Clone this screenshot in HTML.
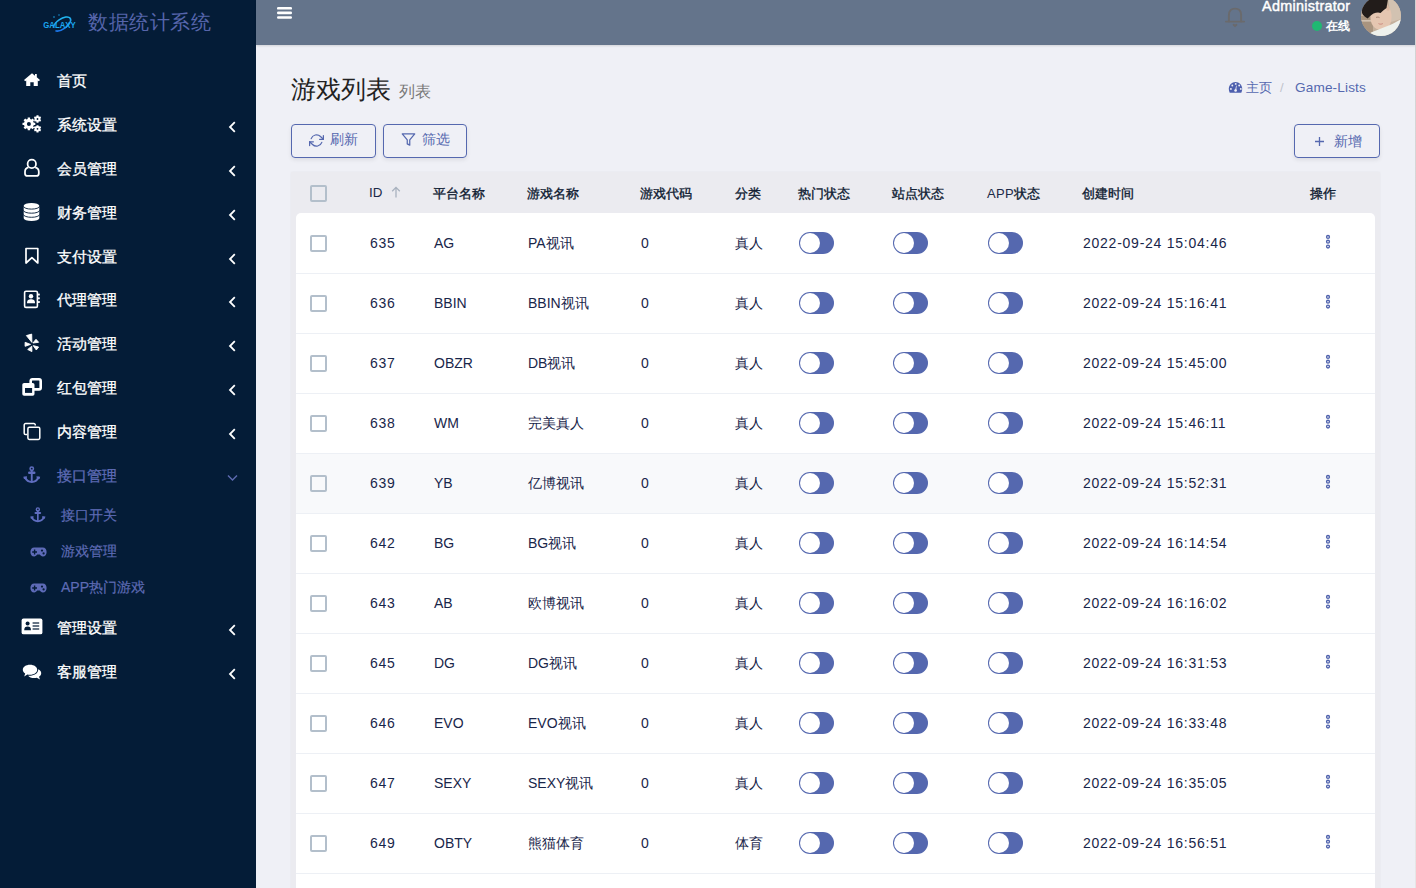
<!DOCTYPE html>
<html><head><meta charset="utf-8">
<style>
*{margin:0;padding:0;box-sizing:border-box}
html,body{width:1416px;height:888px;overflow:hidden;background:#eff0f6;font-family:"Liberation Sans",sans-serif}
.abs{position:absolute}
.ico{position:absolute;overflow:visible}
#side{position:absolute;left:0;top:0;width:256px;height:888px;background:#041c37}
#hdr{position:absolute;left:256px;top:0;width:1160px;height:45px;background:#64748b;box-shadow:0 1px 2px rgba(0,0,0,.12)}
.mi{position:absolute;left:57px;color:#fff;font-size:15px;font-weight:500;-webkit-text-stroke:.3px currentColor;line-height:20px;white-space:nowrap}
.mi.act{color:#5e6bb5}
.si{position:absolute;left:61px;color:#5e6bb5;font-size:14px;-webkit-text-stroke:.2px currentColor;line-height:18px;white-space:nowrap}
.chev{position:absolute;left:228px}
.t{position:absolute;white-space:nowrap;line-height:18px}
.th{font-size:13px;font-weight:500;-webkit-text-stroke:.35px currentColor;color:#0d1a31;top:184.5px}
.td{font-size:14px;color:#19264a;letter-spacing:.75px;font-weight:500}
.cb{position:absolute;left:310px;width:17px;height:17px;border:2px solid #b3bfcb;border-radius:2px}
.tg{position:absolute;width:35px;height:22px;border-radius:11px;background:#5568af}
.tg:after{content:"";position:absolute;left:1px;top:1px;width:20px;height:20px;border-radius:50%;background:#fff}
.btn{position:absolute;top:124px;height:34px;border:1px solid #5568af;border-radius:4px;box-shadow:0 2px 4px rgba(0,0,0,.08);color:#5568af;font-size:14px}

</style></head><body>
<div id="side">
<svg class="ico" style="left:40px;top:12px" width="40" height="24" viewBox="0 0 40 24">
<defs><linearGradient id="lg" x1="0" y1="1" x2="1" y2="0"><stop offset="0" stop-color="#1a6cf0"/><stop offset="1" stop-color="#22c4f0"/></linearGradient></defs>
<ellipse cx="22" cy="12" rx="10" ry="5" transform="rotate(-35 22 12)" fill="none" stroke="url(#lg)" stroke-width="1.6" stroke-dasharray="22 4 30"/>
<text x="3.2" y="15.8" font-family="Liberation Sans" font-weight="bold" font-size="8.3" fill="#1aa8f0" letter-spacing=".05" textLength="32.6" lengthAdjust="spacingAndGlyphs">GALAXY</text>
<circle cx="14" cy="5" r=".8" fill="#1aa8f0"/><circle cx="19" cy="3" r=".7" fill="#1aa8f0"/>
</svg>
<div class="abs" style="left:88px;top:9px;font-size:20px;line-height:26px;font-weight:300;letter-spacing:.55px;color:#5665ab;white-space:nowrap">数据统计系统</div>
<svg class="ico" style="left:23px;top:72px" width="18" height="15" viewBox="0 0 18 15"><path d="M9 1.2 L1 8 L2.2 9.2 L3.2 8.4 V14 H7.3 V10.2 H10.7 V14 H14.8 V8.4 L15.8 9.2 L17 8 L13.8 5.3 V2 H12 V3.8 Z" fill="#fff"/></svg>
<div class="mi" style="top:71px">首页</div>
<svg class="ico" style="left:19px;top:112px" width="26" height="24" viewBox="0 0 26 24"><path fill-rule="evenodd" fill="#fff" d="M8.69 7.05 L8.69 5.51 L11.11 5.51 L11.11 7.05 L12.48 7.61 L13.56 6.53 L15.27 8.24 L14.19 9.32 L14.75 10.69 L16.29 10.69 L16.29 13.11 L14.75 13.11 L14.19 14.48 L15.27 15.56 L13.56 17.27 L12.48 16.19 L11.11 16.75 L11.11 18.29 L8.69 18.29 L8.69 16.75 L7.32 16.19 L6.24 17.27 L4.53 15.56 L5.61 14.48 L5.05 13.11 L3.51 13.11 L3.51 10.69 L5.05 10.69 L5.61 9.32 L4.53 8.24 L6.24 6.53 L7.32 7.61Z M11.90 11.90 A2.0 2.0 0 1 0 7.90 11.90 A2.0 2.0 0 1 0 11.90 11.90Z M17.50 4.28 L17.46 3.34 L19.54 3.34 L19.50 4.28 L20.36 4.77 L21.15 4.27 L22.18 6.07 L21.36 6.50 L21.36 7.50 L22.18 7.93 L21.15 9.73 L20.36 9.23 L19.50 9.72 L19.54 10.66 L17.46 10.66 L17.50 9.72 L16.64 9.23 L15.85 9.73 L14.82 7.93 L15.64 7.50 L15.64 6.50 L14.82 6.07 L15.85 4.27 L16.64 4.77Z M19.40 7.00 A0.9 0.9 0 1 0 17.60 7.00 A0.9 0.9 0 1 0 19.40 7.00Z M17.50 14.08 L17.46 13.14 L19.54 13.14 L19.50 14.08 L20.36 14.57 L21.15 14.07 L22.18 15.87 L21.36 16.30 L21.36 17.30 L22.18 17.73 L21.15 19.53 L20.36 19.03 L19.50 19.52 L19.54 20.46 L17.46 20.46 L17.50 19.52 L16.64 19.03 L15.85 19.53 L14.82 17.73 L15.64 17.30 L15.64 16.30 L14.82 15.87 L15.85 14.07 L16.64 14.57Z M19.40 16.80 A0.9 0.9 0 1 0 17.60 16.80 A0.9 0.9 0 1 0 19.40 16.80Z"/></svg>
<div class="mi" style="top:115px">系统设置</div>
<svg class="chev" style="top:120.5px" width="9" height="12" viewBox="0 0 9 12"><path d="M6.8 1.2 L2 6 L6.8 10.8" fill="none" stroke="#fff" stroke-width="1.8"/></svg>
<svg class="ico" style="left:19px;top:155px" width="26" height="26" viewBox="0 0 26 26"><g fill="none" stroke="#fff" stroke-width="1.75"><circle cx="12.8" cy="8.9" r="4.2"/><path d="M9.4 12.4 C7.2 12.9 6 14.6 6 16.8 V18.4 C6 19.9 7 20.9 8.5 20.9 H17.3 C18.8 20.9 19.8 19.9 19.8 18.4 V16.8 C19.8 14.6 18.6 12.9 16.2 12.4"/></g></svg>
<div class="mi" style="top:159px">会员管理</div>
<svg class="chev" style="top:164.5px" width="9" height="12" viewBox="0 0 9 12"><path d="M6.8 1.2 L2 6 L6.8 10.8" fill="none" stroke="#fff" stroke-width="1.8"/></svg>
<svg class="ico" style="left:23px;top:202px" width="17" height="20" viewBox="0 0 17 20"><path d="M.7 3.7 A7.8 2.8 0 0 1 16.3 3.7 V16.3 A7.8 2.8 0 0 1 .7 16.3 Z" fill="#fff"/><g fill="none" stroke="#041c37" stroke-width=".9"><path d="M.5 4.3 A8 2.8 0 0 0 16.5 4.3"/><path d="M.5 8.4 A8 2.8 0 0 0 16.5 8.4"/><path d="M.5 12.5 A8 2.8 0 0 0 16.5 12.5"/></g></svg>
<div class="mi" style="top:203px">财务管理</div>
<svg class="chev" style="top:208.5px" width="9" height="12" viewBox="0 0 9 12"><path d="M6.8 1.2 L2 6 L6.8 10.8" fill="none" stroke="#fff" stroke-width="1.8"/></svg>
<svg class="ico" style="left:24px;top:247px" width="16" height="18" viewBox="0 0 16 18"><path d="M2 1.5 H13.8 V16 L7.9 10.6 L2 16 Z" fill="none" stroke="#fff" stroke-width="1.7" stroke-linejoin="round"/></svg>
<div class="mi" style="top:247px">支付设置</div>
<svg class="chev" style="top:252.5px" width="9" height="12" viewBox="0 0 9 12"><path d="M6.8 1.2 L2 6 L6.8 10.8" fill="none" stroke="#fff" stroke-width="1.8"/></svg>
<svg class="ico" style="left:23px;top:290px" width="18" height="19" viewBox="0 0 18 19"><rect x="1.6" y="1.2" width="12.8" height="16.2" rx="1.4" fill="none" stroke="#fff" stroke-width="1.6"/><g fill="#fff"><circle cx="8" cy="6.3" r="2.2"/><path d="M4 13.3 C4 10 5.5 9.2 8 9.2 C10.5 9.2 12 10 12 13.3 Z"/><rect x="15" y="3.6" width="1.8" height="1.9" rx=".5"/><rect x="15" y="7.3" width="1.8" height="1.9" rx=".5"/><rect x="15" y="11" width="1.8" height="1.9" rx=".5"/></g></svg>
<div class="mi" style="top:290px">代理管理</div>
<svg class="chev" style="top:295.5px" width="9" height="12" viewBox="0 0 9 12"><path d="M6.8 1.2 L2 6 L6.8 10.8" fill="none" stroke="#fff" stroke-width="1.8"/></svg>
<svg class="ico" style="left:24px;top:333px" width="16" height="20" viewBox="0 0 16 20"><g fill="#fff" stroke="#fff" stroke-width=".9" stroke-linejoin="round"><path d="M2.4 2.6 L7.7 1.1 L7.9 9.4 Z"/><path d="M8.9 10 L12 6.3 L14.6 9.3 Z"/><path d="M1.1 9.3 L6.5 11.4 L1.1 13.3 Z"/><path d="M3.7 16.5 L7.8 13.2 L7.9 18.6 Z"/><path d="M9.2 12.6 L14.6 14 L12.3 17 Z"/></g></svg>
<div class="mi" style="top:334px">活动管理</div>
<svg class="chev" style="top:339.5px" width="9" height="12" viewBox="0 0 9 12"><path d="M6.8 1.2 L2 6 L6.8 10.8" fill="none" stroke="#fff" stroke-width="1.8"/></svg>
<svg class="ico" style="left:22px;top:378px" width="21" height="19" viewBox="0 0 21 19"><rect x="8.7" y="1.3" width="10" height="10.1" rx="1.6" fill="none" stroke="#fff" stroke-width="2.6"/><rect x=".3" y="5" width="12.2" height="12.7" rx="1.8" fill="#fff"/><rect x="3" y="10" width="7.1" height="4.9" fill="#041c37"/></svg>
<div class="mi" style="top:378px">红包管理</div>
<svg class="chev" style="top:383.5px" width="9" height="12" viewBox="0 0 9 12"><path d="M6.8 1.2 L2 6 L6.8 10.8" fill="none" stroke="#fff" stroke-width="1.8"/></svg>
<svg class="ico" style="left:23px;top:422px" width="18" height="19" viewBox="0 0 18 19"><g fill="none" stroke="#fff" stroke-width="1.5"><path d="M12.3 3.6 V3 a1.4 1.4 0 0 0-1.4-1.4 H2.6 A1.4 1.4 0 0 0 1.2 3 V11.2 a1.4 1.4 0 0 0 1.4 1.4 H4.2"/><rect x="4.9" y="5.3" width="11.9" height="12.2" rx="1.4"/></g></svg>
<div class="mi" style="top:422px">内容管理</div>
<svg class="chev" style="top:427.5px" width="9" height="12" viewBox="0 0 9 12"><path d="M6.8 1.2 L2 6 L6.8 10.8" fill="none" stroke="#fff" stroke-width="1.8"/></svg>
<svg class="ico" style="left:23px;top:466px" width="17.5" height="17.5" viewBox="0 0 18 18"><g fill="none" stroke="#5f6dbf" stroke-linecap="round"><circle cx="9" cy="2.8" r="1.75" stroke-width="1.6"/><path d="M9 4.6 V16" stroke-width="1.9"/><path d="M6.4 6.9 H11.6" stroke-width="2.5"/><path d="M2.2 12 C3.6 15.2 6 16.4 9 16.4 C12 16.4 14.4 15.2 15.8 12" stroke-width="2"/></g><path d="M.3 11 L4.2 10.6 L3.6 13.6 L1 13.4Z M17.7 11 L13.8 10.6 L14.4 13.6 L17 13.4Z" fill="#5f6dbf"/></svg>
<div class="mi act" style="top:466px">接口管理</div>
<svg class="chev" style="left:227px;top:474px" width="11" height="8" viewBox="0 0 11 8"><path d="M1 1.4 L5.5 6 L10 1.4" fill="none" stroke="#5d6ab0" stroke-width="1.4"/></svg>
<svg class="ico" style="left:29.5px;top:507px" width="15.7" height="15.7" viewBox="0 0 18 18"><g fill="none" stroke="#5f6dbf" stroke-linecap="round"><circle cx="9" cy="2.8" r="1.75" stroke-width="1.6"/><path d="M9 4.6 V16" stroke-width="1.9"/><path d="M6.4 6.9 H11.6" stroke-width="2.5"/><path d="M2.2 12 C3.6 15.2 6 16.4 9 16.4 C12 16.4 14.4 15.2 15.8 12" stroke-width="2"/></g><path d="M.3 11 L4.2 10.6 L3.6 13.6 L1 13.4Z M17.7 11 L13.8 10.6 L14.4 13.6 L17 13.4Z" fill="#5f6dbf"/></svg>
<div class="si" style="top:506px">接口开关</div>
<svg class="ico" style="left:30px;top:547px" width="17" height="10" viewBox="0 0 17 10"><path d="M4.2 .5 H12.8 C15.2 .5 16.6 2.4 16.6 5 C16.6 7.6 15.2 9.5 12.8 9.5 C11.4 9.5 10.6 8.4 9.8 7.6 H7.2 C6.4 8.4 5.6 9.5 4.2 9.5 C1.8 9.5 .4 7.6 .4 5 C.4 2.4 1.8 .5 4.2 .5Z" fill="#5e6bb8"/><path d="M4.6 2.6 V7.4 M2.2 5 H7" stroke="#041c37" stroke-width="1.4"/><circle cx="12" cy="3.6" r="1.1" fill="#041c37"/><circle cx="13.6" cy="6.4" r="1.1" fill="#041c37"/></svg>
<div class="si" style="top:542px">游戏管理</div>
<svg class="ico" style="left:30px;top:583px" width="17" height="10" viewBox="0 0 17 10"><path d="M4.2 .5 H12.8 C15.2 .5 16.6 2.4 16.6 5 C16.6 7.6 15.2 9.5 12.8 9.5 C11.4 9.5 10.6 8.4 9.8 7.6 H7.2 C6.4 8.4 5.6 9.5 4.2 9.5 C1.8 9.5 .4 7.6 .4 5 C.4 2.4 1.8 .5 4.2 .5Z" fill="#5e6bb8"/><path d="M4.6 2.6 V7.4 M2.2 5 H7" stroke="#041c37" stroke-width="1.4"/><circle cx="12" cy="3.6" r="1.1" fill="#041c37"/><circle cx="13.6" cy="6.4" r="1.1" fill="#041c37"/></svg>
<div class="si" style="top:578px">APP热门游戏</div>
<svg class="ico" style="left:21px;top:618px" width="22" height="18" viewBox="0 0 22 18"><path d="M2.5 .6 H19.5 a1.9 1.9 0 0 1 1.9 1.9 V14.4 a1.9 1.9 0 0 1-1.9 1.9 H2.5 A1.9 1.9 0 0 1 .6 14.4 V2.5 A1.9 1.9 0 0 1 2.5 .6Z" fill="#fff"/><g fill="#041c37"><circle cx="6.6" cy="5.6" r="2"/><path d="M3.2 12.2 C3.2 9.4 4.4 8.4 6.6 8.4 C8.8 8.4 10 9.4 10 12.2Z"/><rect x="11.6" y="4.4" width="6.6" height="1.2"/><rect x="11.6" y="7.4" width="6.6" height="1.2"/><rect x="11.6" y="10.4" width="6.6" height="1.2"/></g></svg>
<div class="mi" style="top:618px">管理设置</div>
<svg class="chev" style="top:623.5px" width="9" height="12" viewBox="0 0 9 12"><path d="M6.8 1.2 L2 6 L6.8 10.8" fill="none" stroke="#fff" stroke-width="1.8"/></svg>
<svg class="ico" style="left:22px;top:664px" width="20" height="17" viewBox="0 0 20 17"><path d="M8 .8 C12.2 .8 15.2 3 15.2 5.8 C15.2 8.6 12.2 10.8 8 10.8 C7 10.8 6.2 10.7 5.4 10.5 L2.2 12.4 L3.2 9.6 C1.6 8.6 .8 7.3 .8 5.8 C.8 3 3.8 .8 8 .8Z" fill="#fff"/><path d="M16.2 5.2 C18.2 6.2 19.2 7.6 19.2 9.2 C19.2 10.6 18.4 11.8 17 12.8 L18 15.6 L14.8 13.8 C14 14 13.2 14.1 12.2 14.1 C9.4 14.1 7.2 13.2 6.2 11.7 C11.6 12 16.4 9.6 16.2 5.2Z" fill="#fff"/></svg>
<div class="mi" style="top:662px">客服管理</div>
<svg class="chev" style="top:667.5px" width="9" height="12" viewBox="0 0 9 12"><path d="M6.8 1.2 L2 6 L6.8 10.8" fill="none" stroke="#fff" stroke-width="1.8"/></svg>
</div>
<div id="hdr"></div>
<svg class="ico" style="left:276px;top:6px" width="17" height="14" viewBox="0 0 17 14"><g fill="#fff"><rect x="1" y="1" width="15" height="2.6" rx="1.2"/><rect x="1" y="5.6" width="15" height="2.6" rx="1.2"/><rect x="1" y="10.2" width="15" height="2.6" rx="1.2"/></g></svg>
<svg class="ico" style="left:1224px;top:6px" width="22" height="22" viewBox="0 0 22 22"><g fill="none" stroke="#6a6a6c" stroke-width="1.9" stroke-linecap="round"><path d="M4.9 15.4 V9 C4.9 4.6 7.4 2.6 11 2.6 C14.6 2.6 17.1 4.6 17.1 9 V15.4"/><path d="M1.9 15.6 H20.1"/><path d="M9.6 18.8 L11 20 L12.4 18.8"/></g></svg>
<div class="abs" style="left:1262px;top:-2px;font-size:14.4px;line-height:16px;color:#fff;-webkit-text-stroke:.45px #fff;letter-spacing:.28px;white-space:nowrap">Administrator</div>
<div class="abs" style="left:1312px;top:21px;width:10px;height:10px;border-radius:50%;background:#1fb872"></div>
<div class="abs" style="left:1326px;top:18px;font-size:12px;line-height:16px;font-weight:bold;color:#fff;white-space:nowrap">在线</div>
<svg class="ico" style="left:1361px;top:-4px" width="40" height="40" viewBox="0 0 40 40">
<defs><clipPath id="av"><circle cx="20" cy="20" r="20"/></clipPath></defs>
<g clip-path="url(#av)">
<rect width="40" height="40" fill="#c4b09c"/>
<path d="M27 0 H40 V23 L30 26Z" fill="#d2c2b1"/>
<rect x="0" y="20" width="12" height="20" fill="#a9947f"/>
<rect x="0" y="24.2" width="12" height="1.3" fill="#dccdbd"/>
<path d="M9.5 20 C9 28 13 33.5 20 34 C27 34 31 28 30.5 19 C30 12 26 8 20 8 C14 8 10 12 9.5 20Z" fill="#e5c6b1"/>
<path d="M25 8 C27 9 28.5 11 28.5 14 C27.5 15 26.5 15 25.5 14Z" fill="#dcb9a2"/>
<path d="M8 40 L10 36.4 C18 33 30 29.5 41 22.5 V40Z" fill="#eef1ec"/>
<path d="M1 9 C4 3 12 -1 22 -.5 C25 0 27 1 27 3 C26.5 6 26 9 25.5 12 C23.5 13.5 21.5 15 19.5 17 C17.5 16 15 16.5 12.5 17.5 C10 19 8 21 6.8 22.5 C4.5 21.5 2 19.5 1 17Z" fill="#221c1a"/>
<path d="M15 21.5 C16 21 17.5 21 18.5 21.6" stroke="#8f6a5a" stroke-width=".7" fill="none"/>
<path d="M17.5 27.6 C19 28.4 20.5 28.3 21.8 27.6" stroke="#c98a7e" stroke-width="1" fill="none"/>
</g></svg>
<div class="abs" style="left:1415px;top:0;width:1px;height:888px;background:linear-gradient(#d2d2d2,#dcdcdc 45%,#e6e6e6)"></div>
<div class="abs" style="left:291px;top:74px;font-size:25px;line-height:30px;color:#222;white-space:nowrap">游戏列表</div>
<div class="abs" style="left:398.5px;top:82.5px;font-size:16px;line-height:18px;color:#777;white-space:nowrap">列表</div>
<svg class="ico" style="left:1228px;top:81px" width="15" height="13" viewBox="0 0 15 13"><path d="M7.5 1 C3.8 1 .8 4 .8 7.8 C.8 9.3 1.1 10.6 1.7 11.8 H13.3 C13.9 10.6 14.2 9.3 14.2 7.8 C14.2 4 11.2 1 7.5 1Z" fill="#4d5fae"/><g fill="#eff0f6"><circle cx="2.9" cy="7.9" r=".95"/><circle cx="4.3" cy="4.5" r=".95"/><circle cx="7.7" cy="2.9" r=".95"/><circle cx="11.2" cy="4.5" r=".95"/><circle cx="12.8" cy="7.9" r=".95"/><circle cx="7.6" cy="9.5" r="1.35"/><path d="M7 9.5 L8.2 4.6 L8.7 4.7 L8.2 9.6Z"/></g></svg>
<div class="abs" style="left:1246px;top:79.5px;font-size:13px;line-height:16px;color:#5568af;white-space:nowrap">主页</div>
<div class="abs" style="left:1280px;top:80px;font-size:13px;line-height:16px;color:#bfc3cc;white-space:nowrap">/</div>
<div class="abs" style="left:1295px;top:79.5px;font-size:13.6px;line-height:16px;color:#5568af;letter-spacing:.15px;white-space:nowrap">Game-Lists</div>
<div class="btn" style="left:291px;width:85px"><svg class="ico" style="left:16.5px;top:7.5px" width="15" height="15" viewBox="0 0 24 24"><g fill="none" stroke="#5568af" stroke-width="2" stroke-linecap="round" stroke-linejoin="round"><polyline points="23 4 23 10 17 10"/><polyline points="1 20 1 14 7 14"/><path d="M3.51 9a9 9 0 0 1 14.85-3.36L23 10M1 14l4.64 4.36A9 9 0 0 0 20.49 15"/></g></svg><div class="abs" style="left:38px;top:5px;line-height:18px;white-space:nowrap">刷新</div></div>
<div class="btn" style="left:383px;width:84px"><svg class="ico" style="left:16.5px;top:7px" width="15" height="15" viewBox="0 0 24 24"><polygon points="22 3 2 3 10 12.46 10 19 14 21 14 12.46 22 3" fill="none" stroke="#5568af" stroke-width="2" stroke-linejoin="round"/></svg><div class="abs" style="left:38px;top:5px;line-height:18px;white-space:nowrap">筛选</div></div>
<div class="btn" style="left:1294px;width:86px"><svg class="ico" style="left:19px;top:10.5px" width="11" height="11" viewBox="0 0 11 11"><path d="M5.5 1 V10 M1 5.5 H10" stroke="#5568af" stroke-width="1.3"/></svg><div class="abs" style="left:39px;top:7px;line-height:18px;white-space:nowrap">新增</div></div>
<div class="abs" style="left:290.5px;top:171.5px;width:1089.5px;height:740px;background:#ebebf0;box-shadow:0 0 2px rgba(0,0,0,.05)"></div>
<div class="abs" style="left:296px;top:213px;width:1079px;height:700px;background:#fff;border-radius:5px 5px 0 0"></div>
<div class="cb" style="left:309.5px;top:185px"></div>
<div class="t" style="left:369px;top:184px;font-size:13.4px;color:#1b2a48">ID</div>
<svg class="ico" style="left:391px;top:186.3px" width="10" height="12" viewBox="0 0 10 12"><path d="M5 11.5 V1.5 M1.2 5.2 L5 1.4 L8.8 5.2" fill="none" stroke="#a9b2bf" stroke-width="1.3"/></svg>
<div class="t th" style="left:433px">平台名称</div>
<div class="t th" style="left:527px">游戏名称</div>
<div class="t th" style="left:640px">游戏代码</div>
<div class="t th" style="left:735px">分类</div>
<div class="t th" style="left:798px">热门状态</div>
<div class="t th" style="left:892px">站点状态</div>
<div class="t" style="left:987px;top:185px;font-size:13px;color:#1b2a48;letter-spacing:.3px">APP<span style="color:#0d1a31;letter-spacing:0;font-weight:500;-webkit-text-stroke:.35px #0d1a31">状态</span></div>
<div class="t th" style="left:1082px">创建时间</div>
<div class="t th" style="left:1310px">操作</div>
<div class="abs" style="left:296px;top:273px;width:1079px;height:1px;background:#edf0f5"></div>
<div class="cb" style="top:235px"></div>
<div class="t td" style="left:370px;top:234px">635</div>
<div class="t td" style="left:434px;top:234px;letter-spacing:0">AG</div>
<div class="t td" style="left:528px;top:234px;letter-spacing:0">PA视讯</div>
<div class="t td" style="left:641px;top:234px">0</div>
<div class="t td" style="left:735px;top:234px;letter-spacing:0">真人</div>
<div class="tg" style="left:799px;top:232px"></div>
<div class="tg" style="left:893px;top:232px"></div>
<div class="tg" style="left:988px;top:232px"></div>
<div class="t td" style="left:1083px;top:234px">2022-09-24 15:04:46</div>
<svg class="ico" style="left:1325px;top:235px" width="6" height="15" viewBox="0 0 6 15"><g fill="none" stroke="#4f62ad" stroke-width="1.35"><circle cx="3" cy="1.9" r="1.45"/><circle cx="3" cy="6.7" r="1.45"/><circle cx="3" cy="11.5" r="1.45"/></g></svg>
<div class="abs" style="left:296px;top:274px;width:1079px;height:59px;background:#fff"></div>
<div class="abs" style="left:296px;top:333px;width:1079px;height:1px;background:#edf0f5"></div>
<div class="cb" style="top:295px"></div>
<div class="t td" style="left:370px;top:294px">636</div>
<div class="t td" style="left:434px;top:294px;letter-spacing:0">BBIN</div>
<div class="t td" style="left:528px;top:294px;letter-spacing:0">BBIN视讯</div>
<div class="t td" style="left:641px;top:294px">0</div>
<div class="t td" style="left:735px;top:294px;letter-spacing:0">真人</div>
<div class="tg" style="left:799px;top:292px"></div>
<div class="tg" style="left:893px;top:292px"></div>
<div class="tg" style="left:988px;top:292px"></div>
<div class="t td" style="left:1083px;top:294px">2022-09-24 15:16:41</div>
<svg class="ico" style="left:1325px;top:295px" width="6" height="15" viewBox="0 0 6 15"><g fill="none" stroke="#4f62ad" stroke-width="1.35"><circle cx="3" cy="1.9" r="1.45"/><circle cx="3" cy="6.7" r="1.45"/><circle cx="3" cy="11.5" r="1.45"/></g></svg>
<div class="abs" style="left:296px;top:334px;width:1079px;height:59px;background:#fff"></div>
<div class="abs" style="left:296px;top:393px;width:1079px;height:1px;background:#edf0f5"></div>
<div class="cb" style="top:355px"></div>
<div class="t td" style="left:370px;top:354px">637</div>
<div class="t td" style="left:434px;top:354px;letter-spacing:0">OBZR</div>
<div class="t td" style="left:528px;top:354px;letter-spacing:0">DB视讯</div>
<div class="t td" style="left:641px;top:354px">0</div>
<div class="t td" style="left:735px;top:354px;letter-spacing:0">真人</div>
<div class="tg" style="left:799px;top:352px"></div>
<div class="tg" style="left:893px;top:352px"></div>
<div class="tg" style="left:988px;top:352px"></div>
<div class="t td" style="left:1083px;top:354px">2022-09-24 15:45:00</div>
<svg class="ico" style="left:1325px;top:355px" width="6" height="15" viewBox="0 0 6 15"><g fill="none" stroke="#4f62ad" stroke-width="1.35"><circle cx="3" cy="1.9" r="1.45"/><circle cx="3" cy="6.7" r="1.45"/><circle cx="3" cy="11.5" r="1.45"/></g></svg>
<div class="abs" style="left:296px;top:394px;width:1079px;height:59px;background:#fff"></div>
<div class="abs" style="left:296px;top:453px;width:1079px;height:1px;background:#edf0f5"></div>
<div class="cb" style="top:415px"></div>
<div class="t td" style="left:370px;top:414px">638</div>
<div class="t td" style="left:434px;top:414px;letter-spacing:0">WM</div>
<div class="t td" style="left:528px;top:414px;letter-spacing:0">完美真人</div>
<div class="t td" style="left:641px;top:414px">0</div>
<div class="t td" style="left:735px;top:414px;letter-spacing:0">真人</div>
<div class="tg" style="left:799px;top:412px"></div>
<div class="tg" style="left:893px;top:412px"></div>
<div class="tg" style="left:988px;top:412px"></div>
<div class="t td" style="left:1083px;top:414px">2022-09-24 15:46:11</div>
<svg class="ico" style="left:1325px;top:415px" width="6" height="15" viewBox="0 0 6 15"><g fill="none" stroke="#4f62ad" stroke-width="1.35"><circle cx="3" cy="1.9" r="1.45"/><circle cx="3" cy="6.7" r="1.45"/><circle cx="3" cy="11.5" r="1.45"/></g></svg>
<div class="abs" style="left:296px;top:454px;width:1079px;height:59px;background:#f8f9fb"></div>
<div class="abs" style="left:296px;top:513px;width:1079px;height:1px;background:#edf0f5"></div>
<div class="cb" style="top:475px"></div>
<div class="t td" style="left:370px;top:474px">639</div>
<div class="t td" style="left:434px;top:474px;letter-spacing:0">YB</div>
<div class="t td" style="left:528px;top:474px;letter-spacing:0">亿博视讯</div>
<div class="t td" style="left:641px;top:474px">0</div>
<div class="t td" style="left:735px;top:474px;letter-spacing:0">真人</div>
<div class="tg" style="left:799px;top:472px"></div>
<div class="tg" style="left:893px;top:472px"></div>
<div class="tg" style="left:988px;top:472px"></div>
<div class="t td" style="left:1083px;top:474px">2022-09-24 15:52:31</div>
<svg class="ico" style="left:1325px;top:475px" width="6" height="15" viewBox="0 0 6 15"><g fill="none" stroke="#4f62ad" stroke-width="1.35"><circle cx="3" cy="1.9" r="1.45"/><circle cx="3" cy="6.7" r="1.45"/><circle cx="3" cy="11.5" r="1.45"/></g></svg>
<div class="abs" style="left:296px;top:514px;width:1079px;height:59px;background:#fff"></div>
<div class="abs" style="left:296px;top:573px;width:1079px;height:1px;background:#edf0f5"></div>
<div class="cb" style="top:535px"></div>
<div class="t td" style="left:370px;top:534px">642</div>
<div class="t td" style="left:434px;top:534px;letter-spacing:0">BG</div>
<div class="t td" style="left:528px;top:534px;letter-spacing:0">BG视讯</div>
<div class="t td" style="left:641px;top:534px">0</div>
<div class="t td" style="left:735px;top:534px;letter-spacing:0">真人</div>
<div class="tg" style="left:799px;top:532px"></div>
<div class="tg" style="left:893px;top:532px"></div>
<div class="tg" style="left:988px;top:532px"></div>
<div class="t td" style="left:1083px;top:534px">2022-09-24 16:14:54</div>
<svg class="ico" style="left:1325px;top:535px" width="6" height="15" viewBox="0 0 6 15"><g fill="none" stroke="#4f62ad" stroke-width="1.35"><circle cx="3" cy="1.9" r="1.45"/><circle cx="3" cy="6.7" r="1.45"/><circle cx="3" cy="11.5" r="1.45"/></g></svg>
<div class="abs" style="left:296px;top:574px;width:1079px;height:59px;background:#fff"></div>
<div class="abs" style="left:296px;top:633px;width:1079px;height:1px;background:#edf0f5"></div>
<div class="cb" style="top:595px"></div>
<div class="t td" style="left:370px;top:594px">643</div>
<div class="t td" style="left:434px;top:594px;letter-spacing:0">AB</div>
<div class="t td" style="left:528px;top:594px;letter-spacing:0">欧博视讯</div>
<div class="t td" style="left:641px;top:594px">0</div>
<div class="t td" style="left:735px;top:594px;letter-spacing:0">真人</div>
<div class="tg" style="left:799px;top:592px"></div>
<div class="tg" style="left:893px;top:592px"></div>
<div class="tg" style="left:988px;top:592px"></div>
<div class="t td" style="left:1083px;top:594px">2022-09-24 16:16:02</div>
<svg class="ico" style="left:1325px;top:595px" width="6" height="15" viewBox="0 0 6 15"><g fill="none" stroke="#4f62ad" stroke-width="1.35"><circle cx="3" cy="1.9" r="1.45"/><circle cx="3" cy="6.7" r="1.45"/><circle cx="3" cy="11.5" r="1.45"/></g></svg>
<div class="abs" style="left:296px;top:634px;width:1079px;height:59px;background:#fff"></div>
<div class="abs" style="left:296px;top:693px;width:1079px;height:1px;background:#edf0f5"></div>
<div class="cb" style="top:655px"></div>
<div class="t td" style="left:370px;top:654px">645</div>
<div class="t td" style="left:434px;top:654px;letter-spacing:0">DG</div>
<div class="t td" style="left:528px;top:654px;letter-spacing:0">DG视讯</div>
<div class="t td" style="left:641px;top:654px">0</div>
<div class="t td" style="left:735px;top:654px;letter-spacing:0">真人</div>
<div class="tg" style="left:799px;top:652px"></div>
<div class="tg" style="left:893px;top:652px"></div>
<div class="tg" style="left:988px;top:652px"></div>
<div class="t td" style="left:1083px;top:654px">2022-09-24 16:31:53</div>
<svg class="ico" style="left:1325px;top:655px" width="6" height="15" viewBox="0 0 6 15"><g fill="none" stroke="#4f62ad" stroke-width="1.35"><circle cx="3" cy="1.9" r="1.45"/><circle cx="3" cy="6.7" r="1.45"/><circle cx="3" cy="11.5" r="1.45"/></g></svg>
<div class="abs" style="left:296px;top:694px;width:1079px;height:59px;background:#fff"></div>
<div class="abs" style="left:296px;top:753px;width:1079px;height:1px;background:#edf0f5"></div>
<div class="cb" style="top:715px"></div>
<div class="t td" style="left:370px;top:714px">646</div>
<div class="t td" style="left:434px;top:714px;letter-spacing:0">EVO</div>
<div class="t td" style="left:528px;top:714px;letter-spacing:0">EVO视讯</div>
<div class="t td" style="left:641px;top:714px">0</div>
<div class="t td" style="left:735px;top:714px;letter-spacing:0">真人</div>
<div class="tg" style="left:799px;top:712px"></div>
<div class="tg" style="left:893px;top:712px"></div>
<div class="tg" style="left:988px;top:712px"></div>
<div class="t td" style="left:1083px;top:714px">2022-09-24 16:33:48</div>
<svg class="ico" style="left:1325px;top:715px" width="6" height="15" viewBox="0 0 6 15"><g fill="none" stroke="#4f62ad" stroke-width="1.35"><circle cx="3" cy="1.9" r="1.45"/><circle cx="3" cy="6.7" r="1.45"/><circle cx="3" cy="11.5" r="1.45"/></g></svg>
<div class="abs" style="left:296px;top:754px;width:1079px;height:59px;background:#fff"></div>
<div class="abs" style="left:296px;top:813px;width:1079px;height:1px;background:#edf0f5"></div>
<div class="cb" style="top:775px"></div>
<div class="t td" style="left:370px;top:774px">647</div>
<div class="t td" style="left:434px;top:774px;letter-spacing:0">SEXY</div>
<div class="t td" style="left:528px;top:774px;letter-spacing:0">SEXY视讯</div>
<div class="t td" style="left:641px;top:774px">0</div>
<div class="t td" style="left:735px;top:774px;letter-spacing:0">真人</div>
<div class="tg" style="left:799px;top:772px"></div>
<div class="tg" style="left:893px;top:772px"></div>
<div class="tg" style="left:988px;top:772px"></div>
<div class="t td" style="left:1083px;top:774px">2022-09-24 16:35:05</div>
<svg class="ico" style="left:1325px;top:775px" width="6" height="15" viewBox="0 0 6 15"><g fill="none" stroke="#4f62ad" stroke-width="1.35"><circle cx="3" cy="1.9" r="1.45"/><circle cx="3" cy="6.7" r="1.45"/><circle cx="3" cy="11.5" r="1.45"/></g></svg>
<div class="abs" style="left:296px;top:814px;width:1079px;height:59px;background:#fff"></div>
<div class="abs" style="left:296px;top:873px;width:1079px;height:1px;background:#edf0f5"></div>
<div class="cb" style="top:835px"></div>
<div class="t td" style="left:370px;top:834px">649</div>
<div class="t td" style="left:434px;top:834px;letter-spacing:0">OBTY</div>
<div class="t td" style="left:528px;top:834px;letter-spacing:0">熊猫体育</div>
<div class="t td" style="left:641px;top:834px">0</div>
<div class="t td" style="left:735px;top:834px;letter-spacing:0">体育</div>
<div class="tg" style="left:799px;top:832px"></div>
<div class="tg" style="left:893px;top:832px"></div>
<div class="tg" style="left:988px;top:832px"></div>
<div class="t td" style="left:1083px;top:834px">2022-09-24 16:56:51</div>
<svg class="ico" style="left:1325px;top:835px" width="6" height="15" viewBox="0 0 6 15"><g fill="none" stroke="#4f62ad" stroke-width="1.35"><circle cx="3" cy="1.9" r="1.45"/><circle cx="3" cy="6.7" r="1.45"/><circle cx="3" cy="11.5" r="1.45"/></g></svg>
</body></html>
